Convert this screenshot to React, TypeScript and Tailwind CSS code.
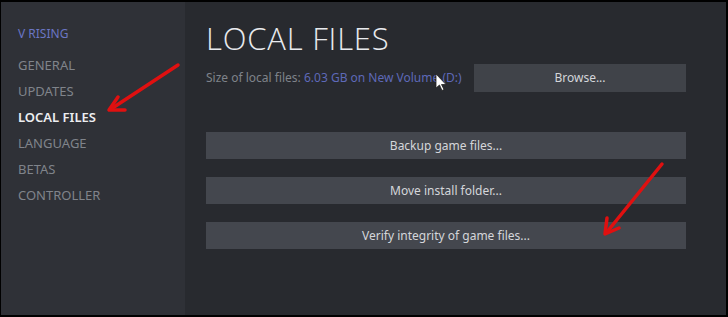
import React from "react";

const navItems = ["GENERAL", "UPDATES", "LOCAL FILES", "LANGUAGE", "BETAS", "CONTROLLER"];

function ActionButton({ label }: { label: string }) {
  return (
    <button className="h-[27px] w-full bg-[#44474e] text-[12px] text-[#d4d6da]">
      {label}
    </button>
  );
}

export default function App() {
  return (
    <div
      className="relative h-[317px] w-[728px] overflow-hidden border-t-2 border-r-2 border-b-2 border-l border-black bg-[#282a2f]"
      style={{ fontFamily: "'Noto Sans', 'Open Sans', sans-serif" }}
    >
      <div className="flex h-full">
        {/* sidebar */}
        <div className="flex w-[184px] flex-col bg-[#2f3137] pl-[17px] pt-[23px]">
          <div className="text-[12px] leading-[18px] text-[#6b76c4]">V RISING</div>
          <div className="mt-[9px] flex flex-col">
            {navItems.map((item) => (
              <div
                key={item}
                className={
                  item === "LOCAL FILES"
                    ? "h-[26px] text-[13px] leading-[26px] font-semibold text-[#eceef1]"
                    : "h-[26px] text-[13px] leading-[26px] text-[#80848b]"
                }
              >
                {item}
              </div>
            ))}
          </div>
        </div>

        {/* main panel */}
        <div className="flex flex-1 flex-col pl-[21px] pr-[40px] pt-[17px]">
          <h1
            className="text-[31px] font-light leading-[38px] tracking-[0.8px] text-[#e8eaee]"
            style={{ fontFamily: "'Open Sans', sans-serif" }}
          >
            LOCAL FILES
          </h1>
          <div className="mt-[7px] flex items-center">
            <div className="text-[12px] text-[#7f838a]">
              Size of local files:{" "}
              <span className="text-[#5e69b8]">6.03 GB on New Volume (D:)</span>
            </div>
            <button className="ml-auto h-[28px] w-[212px] bg-[#404349] text-[12px] text-[#d4d6da]">
              Browse...
            </button>
          </div>
          <div className="mt-[40px] flex flex-col gap-[18px]">
            <ActionButton label="Backup game files..." />
            <ActionButton label="Move install folder..." />
            <ActionButton label="Verify integrity of game files..." />
          </div>
        </div>
      </div>

      {/* annotation arrows and cursor */}
      <svg className="pointer-events-none absolute left-0 top-0" width="728" height="317">
        <g stroke="#e01010" strokeWidth="3.5" strokeLinecap="round" fill="none">
          <line x1="177" y1="63" x2="110" y2="107" />
          <polyline points="117,95 108,108 124,108" strokeLinejoin="round" />
          <line x1="661" y1="162" x2="606" y2="230" />
          <polyline points="606,216 604,232 618,226" strokeLinejoin="round" />
        </g>
        <path
          d="M435 72 L435 86 L438.5 83 L441 88.5 L443 87.5 L440.5 82.5 L445 82.5 Z"
          fill="#ffffff"
          stroke="#222"
          strokeWidth="0.8"
        />
      </svg>
    </div>
  );
}
